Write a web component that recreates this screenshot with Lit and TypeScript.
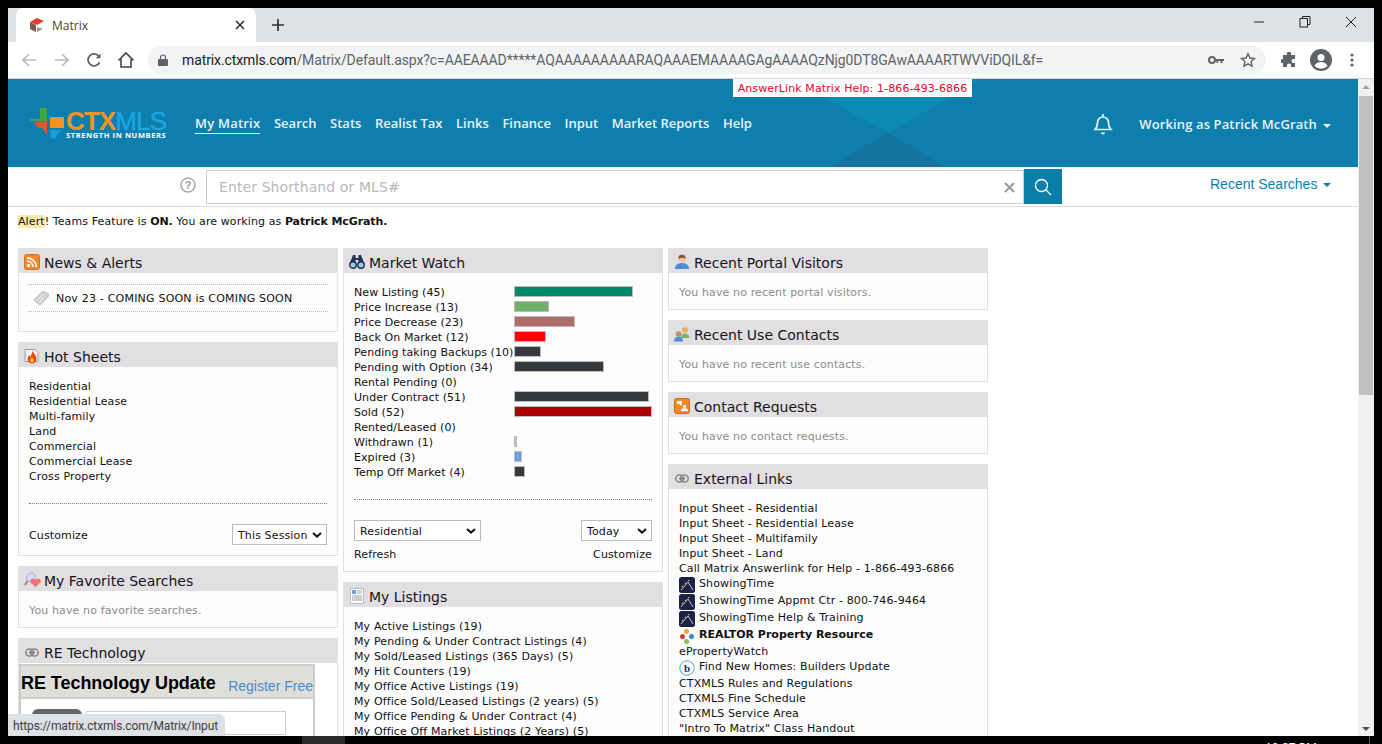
import { LitElement, html, css, svg } from "lit";
import { customElement } from "lit/decorators.js";

const bars: [string, number, string][] = [
  ["New Listing", 45, "#00896b"],
  ["Price Increase", 13, "#6fb06b"],
  ["Price Decrease", 23, "#b06b6b"],
  ["Back On Market", 12, "#ff0000"],
  ["Pending taking Backups", 10, "#36393e"],
  ["Pending with Option", 34, "#36393e"],
  ["Rental Pending", 0, ""],
  ["Under Contract", 51, "#36393e"],
  ["Sold", 52, "#aa0000"],
  ["Rented/Leased", 0, ""],
  ["Withdrawn", 1, "#c4c4c4"],
  ["Expired", 3, "#6f9fe0"],
  ["Temp Off Market", 4, "#36393e"],
];

const iconRss = svg`<svg width="16" height="16" viewBox="0 0 16 16"><rect x=".5" y=".5" width="15" height="15" rx="2" fill="#f58a2c" stroke="#d9701a"/><circle cx="4.5" cy="11.5" r="1.6" fill="#fff"/><path d="M3 7a6 6 0 0 1 6 6M3 3.8A9.2 9.2 0 0 1 12.2 13" fill="none" stroke="#fff" stroke-width="1.7"/></svg>`;
const iconFire = svg`<svg width="16" height="16" viewBox="0 0 16 16"><path d="M1 1.500h10l3 3v9H1z" fill="#f4f4f6" stroke="#9b9ba3"/><path d="M8.500 2.500c1 3 4 4.500 4 8.500a4.500 4.500 0 0 1-9 0c0-2 1-3 2-4 0 1 .5 1.500 1 2 .5-2 2-4 2-6.500z" fill="#e8481a"/><path d="M8 9c.5 1.500 2 2 2 3.500a2 2 0 0 1-4 0C6 11 7.500 10.500 8 9z" fill="#fbc02d"/></svg>`;
const iconFav = svg`<svg width="17" height="16" viewBox="0 0 17 16"><circle cx="7" cy="5.500" r="4.500" fill="#cfe0f2" stroke="#9db3cb"/><path d="M3.500 9 1 13" stroke="#a58a5c" stroke-width="2"/><path d="M11.500 15 6.500 10.500a2.800 2.800 0 0 1 4-3.500l1 1 1-1a2.800 2.800 0 0 1 4 3.500z" fill="#f0717c"/></svg>`;
const iconLink = svg`<svg width="14" height="9" viewBox="0 0 14 9" fill="none" stroke="#8a8a8a" stroke-width="1.600"><rect x=".8" y="1" width="7.500" height="7" rx="3.500"/><rect x="5.700" y="1" width="7.500" height="7" rx="3.500"/><path d="M4 4.500h6" stroke="#777"/></svg>`;
const iconBino = svg`<svg width="16" height="14" viewBox="0 0 16 14"><path d="M4 0h2.500v3h3V0H12l3.500 9h-6V5h-3v4h-6z" fill="#22325a"/><circle cx="4" cy="10" r="3.200" fill="#8fd0ea" stroke="#1d2b50" stroke-width="1.400"/><circle cx="12" cy="10" r="3.200" fill="#8fd0ea" stroke="#1d2b50" stroke-width="1.400"/></svg>`;
const iconDoc = svg`<svg width="14" height="16" viewBox="0 0 14 16"><rect x=".5" y=".5" width="13" height="15" fill="#fdfdfd" stroke="#b6bcc4"/><rect x="2" y="2" width="4" height="4" fill="#6fa3dc"/><path d="M7 3h5M7 5h5M2 8h10M2 10h10M2 12h10" stroke="#9aa3ad"/></svg>`;
const iconPerson = svg`<svg width="16" height="16" viewBox="0 0 16 16"><path d="M1 15c0-4 3-6 7-6s7 2 7 6z" fill="#4d8fd6"/><circle cx="8" cy="5" r="3.600" fill="#f2c6a0"/><path d="M4.400 5C4 1.500 6 .8 8 .8s4 .7 3.600 4.200C10.500 3.500 6 3.500 4.400 5z" fill="#8a5a34"/></svg>`;
const iconPeople = svg`<svg width="16" height="16" viewBox="0 0 16 16"><circle cx="11" cy="4" r="3" fill="#e8b562"/><path d="M6.500 12c0-3 2-4.500 4.500-4.500s4.500 1.500 4.500 4.500z" fill="#7cb56a"/><path d="M0 15.500c0-3.500 2-5 4.500-5s4.500 1.500 4.500 5z" fill="#4d8fd6"/><circle cx="4.500" cy="8" r="2.800" fill="#c98f62"/></svg>`;
const iconReq = svg`<svg width="16" height="16" viewBox="0 0 16 16"><rect x=".5" y=".5" width="15" height="15" rx="2" fill="#f08a1e" stroke="#c96f12"/><path d="M3 3h5v3L6 8V6H3z" fill="#fff"/><circle cx="10.500" cy="8.500" r="1.700" fill="#fff"/><path d="M7 13c0-2 1.500-3 3.500-3s3.500 1 3.500 3z" fill="#fff"/></svg>`;
const iconST = svg`<svg width="16" height="16" viewBox="0 0 16 16"><rect width="16" height="16" rx="2.500" fill="#1c2148"/><path d="M2 13 9 5l5 8" fill="none" stroke="#e8e8f0" stroke-width=".8"/><path d="M3 10l2-2M6 7l2-2M9 4l2-1" stroke="#f0a030" stroke-width="1.300" stroke-dasharray="1.500 1"/></svg>`;
const iconRPR = svg`<svg width="16" height="16" viewBox="0 0 16 16"><rect x="5" y="1" width="5" height="5" rx="2.500" fill="#f3a738"/><rect x="1" y="6" width="5" height="5" rx="2.500" fill="#d8382c"/><rect x="10" y="6" width="5" height="5" rx="2.500" fill="#2a8fd0" transform="rotate(45 12.500 8.500)"/><rect x="5" y="11" width="5" height="5" rx="2.500" fill="#8cc152"/></svg>`;
const iconB = svg`<svg width="16" height="16" viewBox="0 0 16 16"><circle cx="8" cy="8" r="7.200" fill="#fff" stroke="#5a9cc4"/><text x="8" y="12" text-anchor="middle" font-family="Liberation Serif" font-size="11" font-weight="bold" fill="#23324f">b</text></svg>`;
const iconTag = svg`<svg width="16" height="17" viewBox="0 0 17 17"><path d="M1 10 10 1l6 2 .5 3-9 9.500z" fill="#d3d3d3" stroke="#b8b8b8"/><path d="M5 10l5-5M7 12l5-5" stroke="#f5f5f5"/></svg>`;

const hot = ["Residential", "Residential Lease", "Multi-family", "Land", "Commercial", "Commercial Lease", "Cross Property"];
const listings = [
  "My Active Listings (19)", "My Pending & Under Contract Listings (4)", "My Sold/Leased Listings (365 Days) (5)",
  "My Hit Counters (19)", "My Office Active Listings (19)", "My Office Sold/Leased Listings (2 years) (5)",
  "My Office Pending & Under Contract (4)", "My Office Off Market Listings (2 Years) (5)",
];
const nav = ["Search", "Stats", "Realist Tax", "Links", "Finance", "Input", "Market Reports", "Help"];

@customElement("app-root")
export class AppRoot extends LitElement {
  static styles = css`
    :host { display: block; width: 1382px; height: 744px; background: #000; overflow: hidden; font-family: "DejaVu Sans", Verdana, sans-serif; }
    * { box-sizing: border-box; }
    .win { margin: 8px 8px 0; width: 1366px; height: 728px; display: flex; flex-direction: column; background: #fff; position: relative; overflow: hidden; }
    .tabs { height: 34px; background: #dee1e6; display: flex; align-items: flex-end; flex: none; padding-left: 8px; }
    .tab { width: 240px; height: 34px; background: #fff; border-radius: 8px 8px 0 0; display: flex; align-items: center; padding: 0 11px 0 13px; font: 12px "Open Sans", sans-serif; color: #444; }
    .fav { margin-right: 7px; }
    .tab span { flex: 1; }
    .plus { margin: 0 0 9px 14px; width: 16px; height: 16px; }
    .winbtns { margin-left: auto; align-self: flex-start; display: flex; gap: 34px; padding: 8px 17px 0 0; }
    .winbtns svg { display: block; }
    .toolbar { height: 37px; flex: none; background: #fff; border-bottom: 1px solid #d4d4d6; display: flex; align-items: center; padding-left: 13px; }
    .toolbar > svg { flex: none; }
    .m17 { margin-right: 17px; }
    .m16 { margin-right: 16px; }
    .m15 { margin-right: 15px; }
    .home { margin-right: 13px; }
    .omni { width: 1118px; height: 28px; border-radius: 14px; background: #f1f3f4; display: flex; align-items: center; padding: 0 10px; font: 14px Roboto, sans-serif; letter-spacing: -.11px; color: #5f6368; }
    .omni b { font-weight: 400; color: #202124; }
    .omni .url { margin-left: 14px; flex: 1; white-space: nowrap; overflow: hidden; }
    .omni svg { flex: none; }
    .star { margin-left: 16px; }
    .t1 { margin-left: 15px; }
    .t2 { margin-left: 13px; }
    .t3 { margin-left: 18px; }
    .main { flex: 1; display: flex; min-height: 0; position: relative; }
    .page { width: 1350px; overflow: hidden; display: flex; flex-direction: column; }
    .sb { width: 16px; background: #f1f1f1; display: flex; flex-direction: column; align-items: center; position: relative; }
    .sb .ar { width: 0; height: 0; border-left: 4px solid transparent; border-right: 4px solid transparent; margin-top: 6px; border-bottom: 4px solid #a3a3a3; }
    .thumb { width: 14px; height: 299px; background: #c1c1c1; margin-top: 7px; }
    .sb .dn { position: absolute; bottom: 5px; width: 0; height: 0; border-left: 4px solid transparent; border-right: 4px solid transparent; border-top: 4px solid #505050; }
    .hdr { height: 88px; flex: none; background: #0e7fad; position: relative; display: flex; align-items: center; padding-left: 22px; overflow: hidden; color: #e6f4fa; }
    .deco { position: absolute; left: 780px; top: 0; }
    .help { position: absolute; left: 725px; top: 0; width: 239px; height: 18px; background: #fff; color: #f5002d; font-size: 11px; letter-spacing: .1px; display: flex; align-items: center; justify-content: center; white-space: nowrap; }
    .logo { width: 137px; height: 34px; position: relative; flex: none; margin-top: 2px; }
    .logo svg { position: absolute; left: 0; top: 0; }
    .lt { position: absolute; left: 36px; top: 4px; font: 700 26px/20px "Liberation Sans", sans-serif; letter-spacing: -.9px; color: #f29423; white-space: nowrap; }
    .lt i { font-style: normal; font-weight: 400; color: #1aa7e3; -webkit-text-stroke: .4px #1aa7e3; }
    .ls { position: absolute; left: 36px; top: 24px; font: 700 7.500px/9px "Open Sans", sans-serif; letter-spacing: .6px; color: #fff; white-space: nowrap; }
    .nav { display: flex; gap: 13.6px; margin: 2px 0 0 28px; font: 600 13px/19px "Open Sans", sans-serif; color: #e6f4fa; position: relative; }
    .nav .on { border-bottom: 1px solid #e6f4fa; letter-spacing: .22px; }
    .nav span { height: 20px; white-space: nowrap; }
    .right { margin: 2px 27px 0 auto; display: flex; align-items: center; position: relative; font: 600 13px "Open Sans", sans-serif; letter-spacing: .12px; }
    .bell { margin-right: 26px; }
    .caret { display: inline-block; width: 0; height: 0; border-left: 4px solid transparent; border-right: 4px solid transparent; border-top: 4px solid currentColor; margin-left: 6px; vertical-align: middle; }
    .search { height: 40px; flex: none; border-bottom: 1px solid #d9d9d9; display: flex; align-items: flex-start; padding-left: 172px; box-shadow: inset 0 3px 3px -3px #ccc; }
    .q { margin-top: 10px; width: 16px; height: 16px; margin-right: 10px; flex: none; }
    .input { margin-top: 3px; width: 818px; height: 34px; border: 1px solid #ccc; font-size: 14px; color: #b8b8b8; display: flex; align-items: center; padding: 0 8px 0 12px; letter-spacing: .1px; }
    .input span { flex: 1; }
    .go { margin-top: 2px; width: 38px; height: 35px; background: #0a7ea9; display: flex; align-items: center; justify-content: center; flex: none; }
    .recent { margin-left: 148px; margin-top: 7px; font: 14px/20px "Liberation Sans", sans-serif; color: #0e7fad; white-space: nowrap; }
    .alert { height: 25px; flex: none; font-size: 11px; letter-spacing: .1px; color: #111; display: flex; align-items: center; padding: 1px 0 0 10px; margin-top: 1px; white-space: pre; }
    .alert mark { background: #ffe9a6; color: #111; }
    .alert strong { letter-spacing: -.1px; }
    .cols { display: flex; gap: 5px; padding: 15px 0 0 10px; align-items: flex-start; }
    .col { width: 320px; display: flex; flex-direction: column; gap: 10px; flex: none; }
    .panel { border: 1px solid #dfdfe1; border-top: none; background: #fcfcfc; font-size: 11px; letter-spacing: .13px; color: #111; }
    .ph { height: 25px; margin: 0 -1px; background: #e1dfe2; display: flex; align-items: center; font-size: 14px; letter-spacing: 0; color: #15151a; white-space: nowrap; padding-top: 5px; }
    .ic { width: 26px; flex: none; display: flex; justify-content: center; padding: 0 4px 2px 6px; }
    .ic svg { display: block; flex: none; }
    .rows { padding: 0 10px; line-height: 15px; white-space: nowrap; }
    .none { color: #8c8c8c; padding: 12px 10px 0; line-height: 15px; height: 36px; }
    .news { height: 58px; padding: 11px 9px 0; }
    .newsrow { height: 28px; border-top: 1px dotted #bbb; border-bottom: 1px dotted #bbb; display: flex; align-items: center; gap: 7px; padding-left: 5px; letter-spacing: .2px; }
    .newsrow svg { flex: none; }
    .dot { border-top: 1px dotted #777; margin: 19px 10px 0; }
    .mw .dot { margin: 19px 0 0; }
    .foot { display: flex; justify-content: space-between; align-items: center; padding: 20px 10px 0; }
    .hf { padding-bottom: 10px; }
    .hf > span { padding-top: 2px; }
    .rf { padding-top: 6px; padding-bottom: 9px; line-height: 15px; }
    .sel { height: 21px; border: 1px solid #bbb; background: #fff; display: flex; align-items: center; justify-content: space-between; font-size: 11px; color: #111; padding: 1px 4px 0 5px; }
    .sel svg { flex: none; }
    .s1 { width: 95px; }
    .s2 { width: 127px; }
    .s3 { width: 71px; }
    .mw { padding: 12px 10px 0; height: 227px; }
    .mrow { height: 15px; display: flex; align-items: center; white-space: nowrap; position: relative; }
    .mrow .lb { width: 160px; flex: none; letter-spacing: .07px; }
    .bar { height: 11px; border: 1px solid #bbb; flex: none; margin-bottom: 2px; }
    .h1 { padding-top: 12px; }
    .tall { height: 300px; }
    .ex { padding: 12px 10px 0; line-height: 15px; white-space: nowrap; height: 300px; }
    .ex div { height: 15px; display: flex; align-items: center; }
    .ex .w { height: 17px; gap: 4px; }
    .ex .w svg { flex: none; }
    .ex .w span, .ex .w b { margin-top: -2px; }
    .ex b { font-weight: 700; letter-spacing: 0; }
    .tech { height: 400px; padding-top: 1px; background: #fff; }
    .tbox { width: 296px; height: 100px; border: 2px solid #ccc; background: #fff; }
    .tband { height: 33px; background: #e0ded8; border-bottom: 2px solid #ccc; display: flex; align-items: center; justify-content: space-between; white-space: nowrap; font-family: "Liberation Sans", sans-serif; letter-spacing: 0; padding-top: 4px; }
    .tband b { font-size: 18px; letter-spacing: -.05px; color: #000; }
    .tband span { font-size: 14px; color: #3f8fd2; padding-top: 4px; }
    .tform { display: flex; gap: 4px; padding: 10px 0 0 11px; align-items: flex-start; }
    .tbtn { width: 50px; height: 24px; background: #666; border-radius: 6px; flex: none; }
    .tinp { width: 200px; height: 24px; border: 1px solid #ccc; margin-top: 2px; flex: none; }
    .status { position: absolute; left: 0; bottom: 0; height: 22px; width: 217px; background: #dee1e6; border-top-right-radius: 6px; font: 12px/24px Roboto, sans-serif; letter-spacing: -.12px; color: #3c4043; padding-left: 5px; white-space: nowrap; }
    .task { height: 8px; position: relative; overflow: hidden; color: #fff; font: 12px "Open Sans", sans-serif; }
    .task .g { position: absolute; left: 302px; top: 0; width: 43px; height: 8px; background: #2b2b2b; }
    .task .t { position: absolute; left: 1265px; top: 3px; white-space: nowrap; }
    .task .l { position: absolute; left: 1369px; top: 0; width: 1px; height: 8px; background: #555; }
  `;

  private panelHead(icon: unknown, title: string) {
    return html`<div class="ph"><span class="ic">${icon}</span>${title}</div>`;
  }

  private chev() {
    return html`<svg width="10" height="6" viewBox="0 0 10 6"><path d="M1 1l4 3.600L9 1" fill="none" stroke="#111" stroke-width="2"/></svg>`;
  }

  render() {
    return html`
      <div class="win">
        <div class="tabs">
          <div class="tab">
            <svg class="fav" width="16" height="16" viewBox="0 0 16 16"><path d="M1 5l7-4 7 3-7 4z" fill="#e33b2e"/><path d="M1 5l6 3v7l-6-3z" fill="#7b5a48"/><path d="M8 10l6 2-6 3z" fill="#a5988c"/></svg>
            <span>Matrix</span>
            <svg width="10" height="10" viewBox="0 0 10 10"><path d="M1 1l8 8M9 1l-8 8" stroke="#333" stroke-width="1.700"/></svg>
          </div>
          <svg class="plus" viewBox="0 0 16 16"><path d="M8 2v12M2 8h12" stroke="#333" stroke-width="1.700"/></svg>
          <div class="winbtns">
            <svg width="12" height="12" viewBox="0 0 12 12"><path d="M1 6h10" stroke="#222"/></svg>
            <svg width="12" height="12" viewBox="0 0 11 12" fill="none" stroke="#222"><rect x=".5" y="2.500" width="7.500" height="8.500"/><path d="M3 2.500V.5h7.500v8H8"/></svg>
            <svg width="12" height="12" viewBox="0 0 12 12"><path d="M1 1l10 10M11 1L1 11" stroke="#222"/></svg>
          </div>
        </div>
        <div class="toolbar">
          <svg class="m17" width="16" height="16" viewBox="0 0 16 16" fill="none" stroke="#b8babd" stroke-width="1.700"><path d="M15 8H2M8 2L2 8l6 6"/></svg>
          <svg class="m16" width="16" height="16" viewBox="0 0 16 16" fill="none" stroke="#b8babd" stroke-width="1.700"><path d="M1 8h13M8 2l6 6-6 6"/></svg>
          <svg class="m15" width="16" height="16" viewBox="0 0 16 16" fill="none" stroke="#5f6368" stroke-width="1.800"><path d="M13.500 10.500A6 6 0 1 1 13 4.500"/><path d="M14.500 1.500v4.800H9.700z" fill="#5f6368" stroke="none"/></svg>
          <svg class="home" width="18" height="18" viewBox="0 0 18 18" fill="none" stroke="#444" stroke-width="1.600"><path d="M1.500 9.500L9 2l7.500 7.500M4 8v8h10V8"/></svg>
          <div class="omni">
            <svg width="10" height="12" viewBox="0 0 10 12"><path d="M2.500 5V3.500a2.500 2.500 0 0 1 5 0V5" fill="none" stroke="#5f6368" stroke-width="1.200"/><rect y="5" width="10" height="7" rx="1" fill="#5f6368"/></svg>
            <span class="url"><b>matrix.ctxmls.com</b>/Matrix/Default.aspx?c=AAEAAAD*****AQAAAAAAAAARAQAAAEMAAAAGAgAAAAQzNjg0DT8GAwAAAARTWVViDQIL&f=</span>
            <svg width="16" height="10" viewBox="0 0 16 10"><circle cx="4" cy="5" r="3" fill="none" stroke="#5f6368" stroke-width="2"/><path d="M7 4h9v2h-1.500v2h-2V6H10v2H8.500V6H7z" fill="#5f6368"/></svg>
            <svg class="star" width="16" height="16" viewBox="0 0 16 16"><path d="M8 1.800l1.900 4.200 4.600.5-3.400 3.100.9 4.500L8 11.800l-4 2.300.9-4.500L1.500 6.500l4.600-.5z" fill="none" stroke="#5f6368" stroke-width="1.400"/></svg>
          </div>
          <svg class="t1" width="16" height="16" viewBox="0 0 16 16"><path d="M6 1.500a2 2 0 0 1 4 0V3h4v4h-1.500a2 2 0 0 0 0 4H14v4H10v-1.500a2 2 0 0 0-4 0V15H2v-4h-.5a2 2 0 0 1 0-4H2V3h4z" fill="#5f6368"/></svg>
          <svg class="t2" width="22" height="22" viewBox="0 0 22 22"><circle cx="11" cy="11" r="11" fill="#5f6368"/><circle cx="11" cy="8.500" r="3.500" fill="#fff"/><path d="M4.500 17c1-3 4-4 6.500-4s5.500 1 6.500 4a9 9 0 0 1-13 0z" fill="#fff"/></svg>
          <svg class="t3" width="4" height="14" viewBox="0 0 4 14" fill="#5f6368"><circle cx="2" cy="2" r="1.600"/><circle cx="2" cy="7" r="1.600"/><circle cx="2" cy="12" r="1.600"/></svg>
        </div>
        <div class="main">
          <div class="page">
            <div class="hdr">
              <svg class="deco" width="200" height="88" viewBox="0 0 200 88"><path d="M3 0L101 54 192 0z" fill="#0d8ab3"/><path d="M101 54L40 88h117z" fill="#13749f"/></svg>
              <div class="help">AnswerLink Matrix Help: 1-866-493-6866</div>
              <div class="logo">
                <svg width="36" height="33" viewBox="0 0 36 33"><path d="M10 1h7v11H0l4 2h6z" fill="#3fa648"/><path d="M0 12h17v2H0z" fill="#3fa648"/><path d="M20 10h14v11H20z" fill="#f29423"/><path d="M4 14.500h13V27l-5-6H8z" fill="#e2562a"/><path d="M20 23h12l-4 3-3 6-4-1-1-8z" fill="#17a0dc"/></svg>
                <div class="lt">CTX<i>MLS</i></div>
                <div class="ls">STRENGTH IN NUMBERS</div>
              </div>
              <div class="nav">
                <span class="on">My Matrix</span>
                ${nav.map((n) => html`<span>${n}</span>`)}
              </div>
              <div class="right">
                <svg class="bell" width="20" height="22" viewBox="0 0 20 22" fill="none" stroke="#e6f4fa" stroke-width="1.700"><path d="M2 16.500c2-2 2.500-4 2.500-7a5.500 5.500 0 0 1 11 0c0 3 .5 5 2.500 7z"/><path d="M10 1v3"/><path d="M8 19.500a2 2 0 0 0 4 0z" fill="#e6f4fa" stroke="none"/></svg>
                <span>Working as Patrick McGrath<i class="caret"></i></span>
              </div>
            </div>
            <div class="search">
              <svg class="q" viewBox="0 0 16 16"><circle cx="8" cy="8" r="7" fill="none" stroke="#aaa" stroke-width="1.600"/><text x="8" y="12" text-anchor="middle" font-family="Liberation Sans" font-size="11" font-weight="700" fill="#999">?</text></svg>
              <div class="input"><span>Enter Shorthand or MLS#</span><svg width="11" height="11" viewBox="0 0 11 11"><path d="M1 1l9 9M10 1l-9 9" stroke="#9a9a9a" stroke-width="2"/></svg></div>
              <div class="go"><svg width="18" height="18" viewBox="0 0 18 18" fill="none" stroke="#fff" stroke-width="1.300"><circle cx="7.500" cy="7.500" r="6"/><path d="M12 12l5 5"/></svg></div>
              <div class="recent">Recent Searches<i class="caret"></i></div>
            </div>
            <div class="alert"><mark>Alert</mark>! Teams Feature is <strong>ON.</strong> You are working as <strong>Patrick McGrath.</strong></div>
            <div class="cols">
              <div class="col">
                <div class="panel">
                  ${this.panelHead(iconRss, "News & Alerts")}
                  <div class="news"><div class="newsrow">${iconTag}<span>Nov 23 - COMING SOON is COMING SOON</span></div></div>
                </div>
                <div class="panel">
                  ${this.panelHead(iconFire, "Hot Sheets")}
                  <div class="rows h1">${hot.map((h) => html`<div>${h}</div>`)}</div>
                  <div class="dot"></div>
                  <div class="foot hf"><span>Customize</span><div class="sel s1">This Session ${this.chev()}</div></div>
                </div>
                <div class="panel">
                  ${this.panelHead(iconFav, "My Favorite Searches")}
                  <div class="none">You have no favorite searches.</div>
                </div>
                <div class="panel">
                  ${this.panelHead(iconLink, "RE Technology")}
                  <div class="tech">
                    <div class="tbox">
                      <div class="tband"><b>RE Technology Update</b><span>Register Free</span></div>
                      <div class="tform"><div class="tbtn"></div><div class="tinp"></div></div>
                    </div>
                  </div>
                </div>
              </div>
              <div class="col">
                <div class="panel">
                  ${this.panelHead(iconBino, "Market Watch")}
                  <div class="mw">
                    ${bars.map(([l, n, c]) => html`<div class="mrow"><span class="lb">${l} (${n})</span>${n ? html`<span class="bar" style="width:${Math.max(3, Math.round((n * 138) / 52))}px;background:${c}"></span>` : ""}</div>`)}
                    <div class="dot"></div>
                  </div>
                  <div class="foot"><div class="sel s2">Residential ${this.chev()}</div><div class="sel s3">Today ${this.chev()}</div></div>
                  <div class="foot rf"><span>Refresh</span><span>Customize</span></div>
                </div>
                <div class="panel">
                  ${this.panelHead(iconDoc, "My Listings")}
                  <div class="rows h1 tall">${listings.map((h) => html`<div>${h}</div>`)}</div>
                </div>
              </div>
              <div class="col">
                <div class="panel">${this.panelHead(iconPerson, "Recent Portal Visitors")}<div class="none">You have no recent portal visitors.</div></div>
                <div class="panel">${this.panelHead(iconPeople, "Recent Use Contacts")}<div class="none">You have no recent use contacts.</div></div>
                <div class="panel">${this.panelHead(iconReq, "Contact Requests")}<div class="none">You have no contact requests.</div></div>
                <div class="panel">
                  ${this.panelHead(iconLink, "External Links")}
                  <div class="ex">
                    <div>Input Sheet - Residential</div>
                    <div>Input Sheet - Residential Lease</div>
                    <div>Input Sheet - Multifamily</div>
                    <div>Input Sheet - Land</div>
                    <div>Call Matrix Answerlink for Help - 1-866-493-6866</div>
                    <div class="w">${iconST}<span>ShowingTime</span></div>
                    <div class="w">${iconST}<span>ShowingTime Appmt Ctr - 800-746-9464</span></div>
                    <div class="w">${iconST}<span>ShowingTime Help &amp; Training</span></div>
                    <div class="w">${iconRPR}<b>REALTOR Property Resource</b></div>
                    <div>ePropertyWatch</div>
                    <div class="w">${iconB}<span>Find New Homes: Builders Update</span></div>
                    <div>CTXMLS Rules and Regulations</div>
                    <div>CTXMLS Fine Schedule</div>
                    <div>CTXMLS Service Area</div>
                    <div>"Intro To Matrix" Class Handout</div>
                  </div>
                </div>
              </div>
            </div>
          </div>
          <div class="sb"><span class="ar"></span><div class="thumb"></div><span class="dn"></span></div>
          <div class="status">https://matrix.ctxmls.com/Matrix/Input</div>
        </div>
      </div>
      <div class="task"><span class="g"></span><span class="t">10:27 PM</span><span class="l"></span></div>
    `;
  }
}
